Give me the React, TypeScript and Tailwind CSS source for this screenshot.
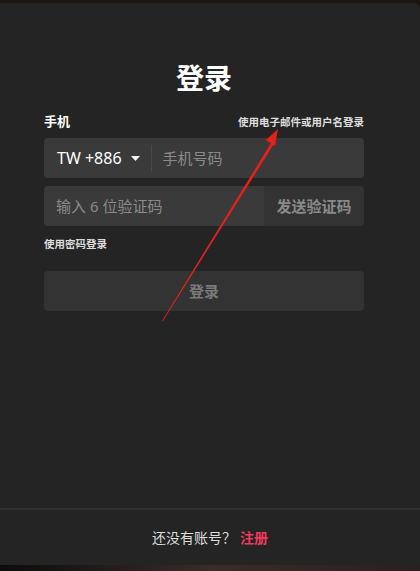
export default function App() {
  return (
    <div
      className="relative w-[420px] h-[571px] overflow-hidden bg-[#1a1712]"
      style={{ fontFamily: '"Noto Sans", "Noto Sans CJK SC", sans-serif' }}
    >
      <div className="absolute inset-x-0 bottom-0 h-[6px] bg-gradient-to-r from-[#0d0c0b] via-[#3a2c28] to-[#2a201e]" />
      <div className="relative mt-[3px] h-[562px] bg-[#242424] rounded-tr-[6px] flex flex-col">
        <div className="ml-[44px] w-[320px] flex flex-col">
          <h1 className="mt-[55px] text-center text-[28px] leading-[40px] font-bold text-white">登录</h1>
          <div className="mt-[14px] flex items-end justify-between">
            <span className="text-[13px] leading-[18px] font-bold text-white">手机</span>
            <span className="text-[10.5px] leading-[16px] font-bold text-[#dcdcdc]">使用电子邮件或用户名登录</span>
          </div>
          <div className="mt-[8px] h-[40px] rounded-[4px] bg-[#3a3a3a] flex items-center">
            <span className="pl-[13px] text-[16px] text-white">TW +886</span>
            <svg width="9" height="5" viewBox="0 0 9 5" className="ml-[9px]">
              <path d="M0 0h9L4.5 5z" fill="#f2f2f2" />
            </svg>
            <div className="ml-[11px] w-px h-[26px] bg-[#4a4a4a]" />
            <span className="ml-[11px] text-[15px] text-[#8a8a8a]">手机号码</span>
          </div>
          <div className="mt-[8px] h-[40px] flex">
            <div className="w-[220px] rounded-l-[4px] bg-[#3a3a3a] flex items-center pl-[12px] text-[15px] text-[#8a8a8a]">
              输入 6 位验证码
            </div>
            <div className="flex-1 rounded-r-[4px] bg-[#333333] flex items-center justify-center text-[15px] font-bold text-[#8a8a8a]">
              发送验证码
            </div>
          </div>
          <span className="mt-[10px] text-[10.5px] leading-[16px] font-bold text-[#dcdcdc]">使用密码登录</span>
          <div className="mt-[19px] h-[40px] rounded-[4px] bg-[#333333] flex items-center justify-center text-[15px] font-bold text-[#7a7a7a]">
            登录
          </div>
        </div>
        <div className="mt-auto h-[57px] border-t-2 border-[#323232] flex items-center justify-center text-[14px] text-[#dcdcdc]">
          还没有账号？
          <span className="ml-[4px] font-bold text-[#f0395c]">注册</span>
        </div>
      </div>
      <svg className="absolute inset-0 pointer-events-none" width="420" height="571" viewBox="0 0 420 571">
        <polygon points="162,321 271,143 273.5,144.5 163,321" fill="#e8201c" />
        <polygon points="278,129 266,140 275,146" fill="#e8201c" />
      </svg>
    </div>
  );
}
